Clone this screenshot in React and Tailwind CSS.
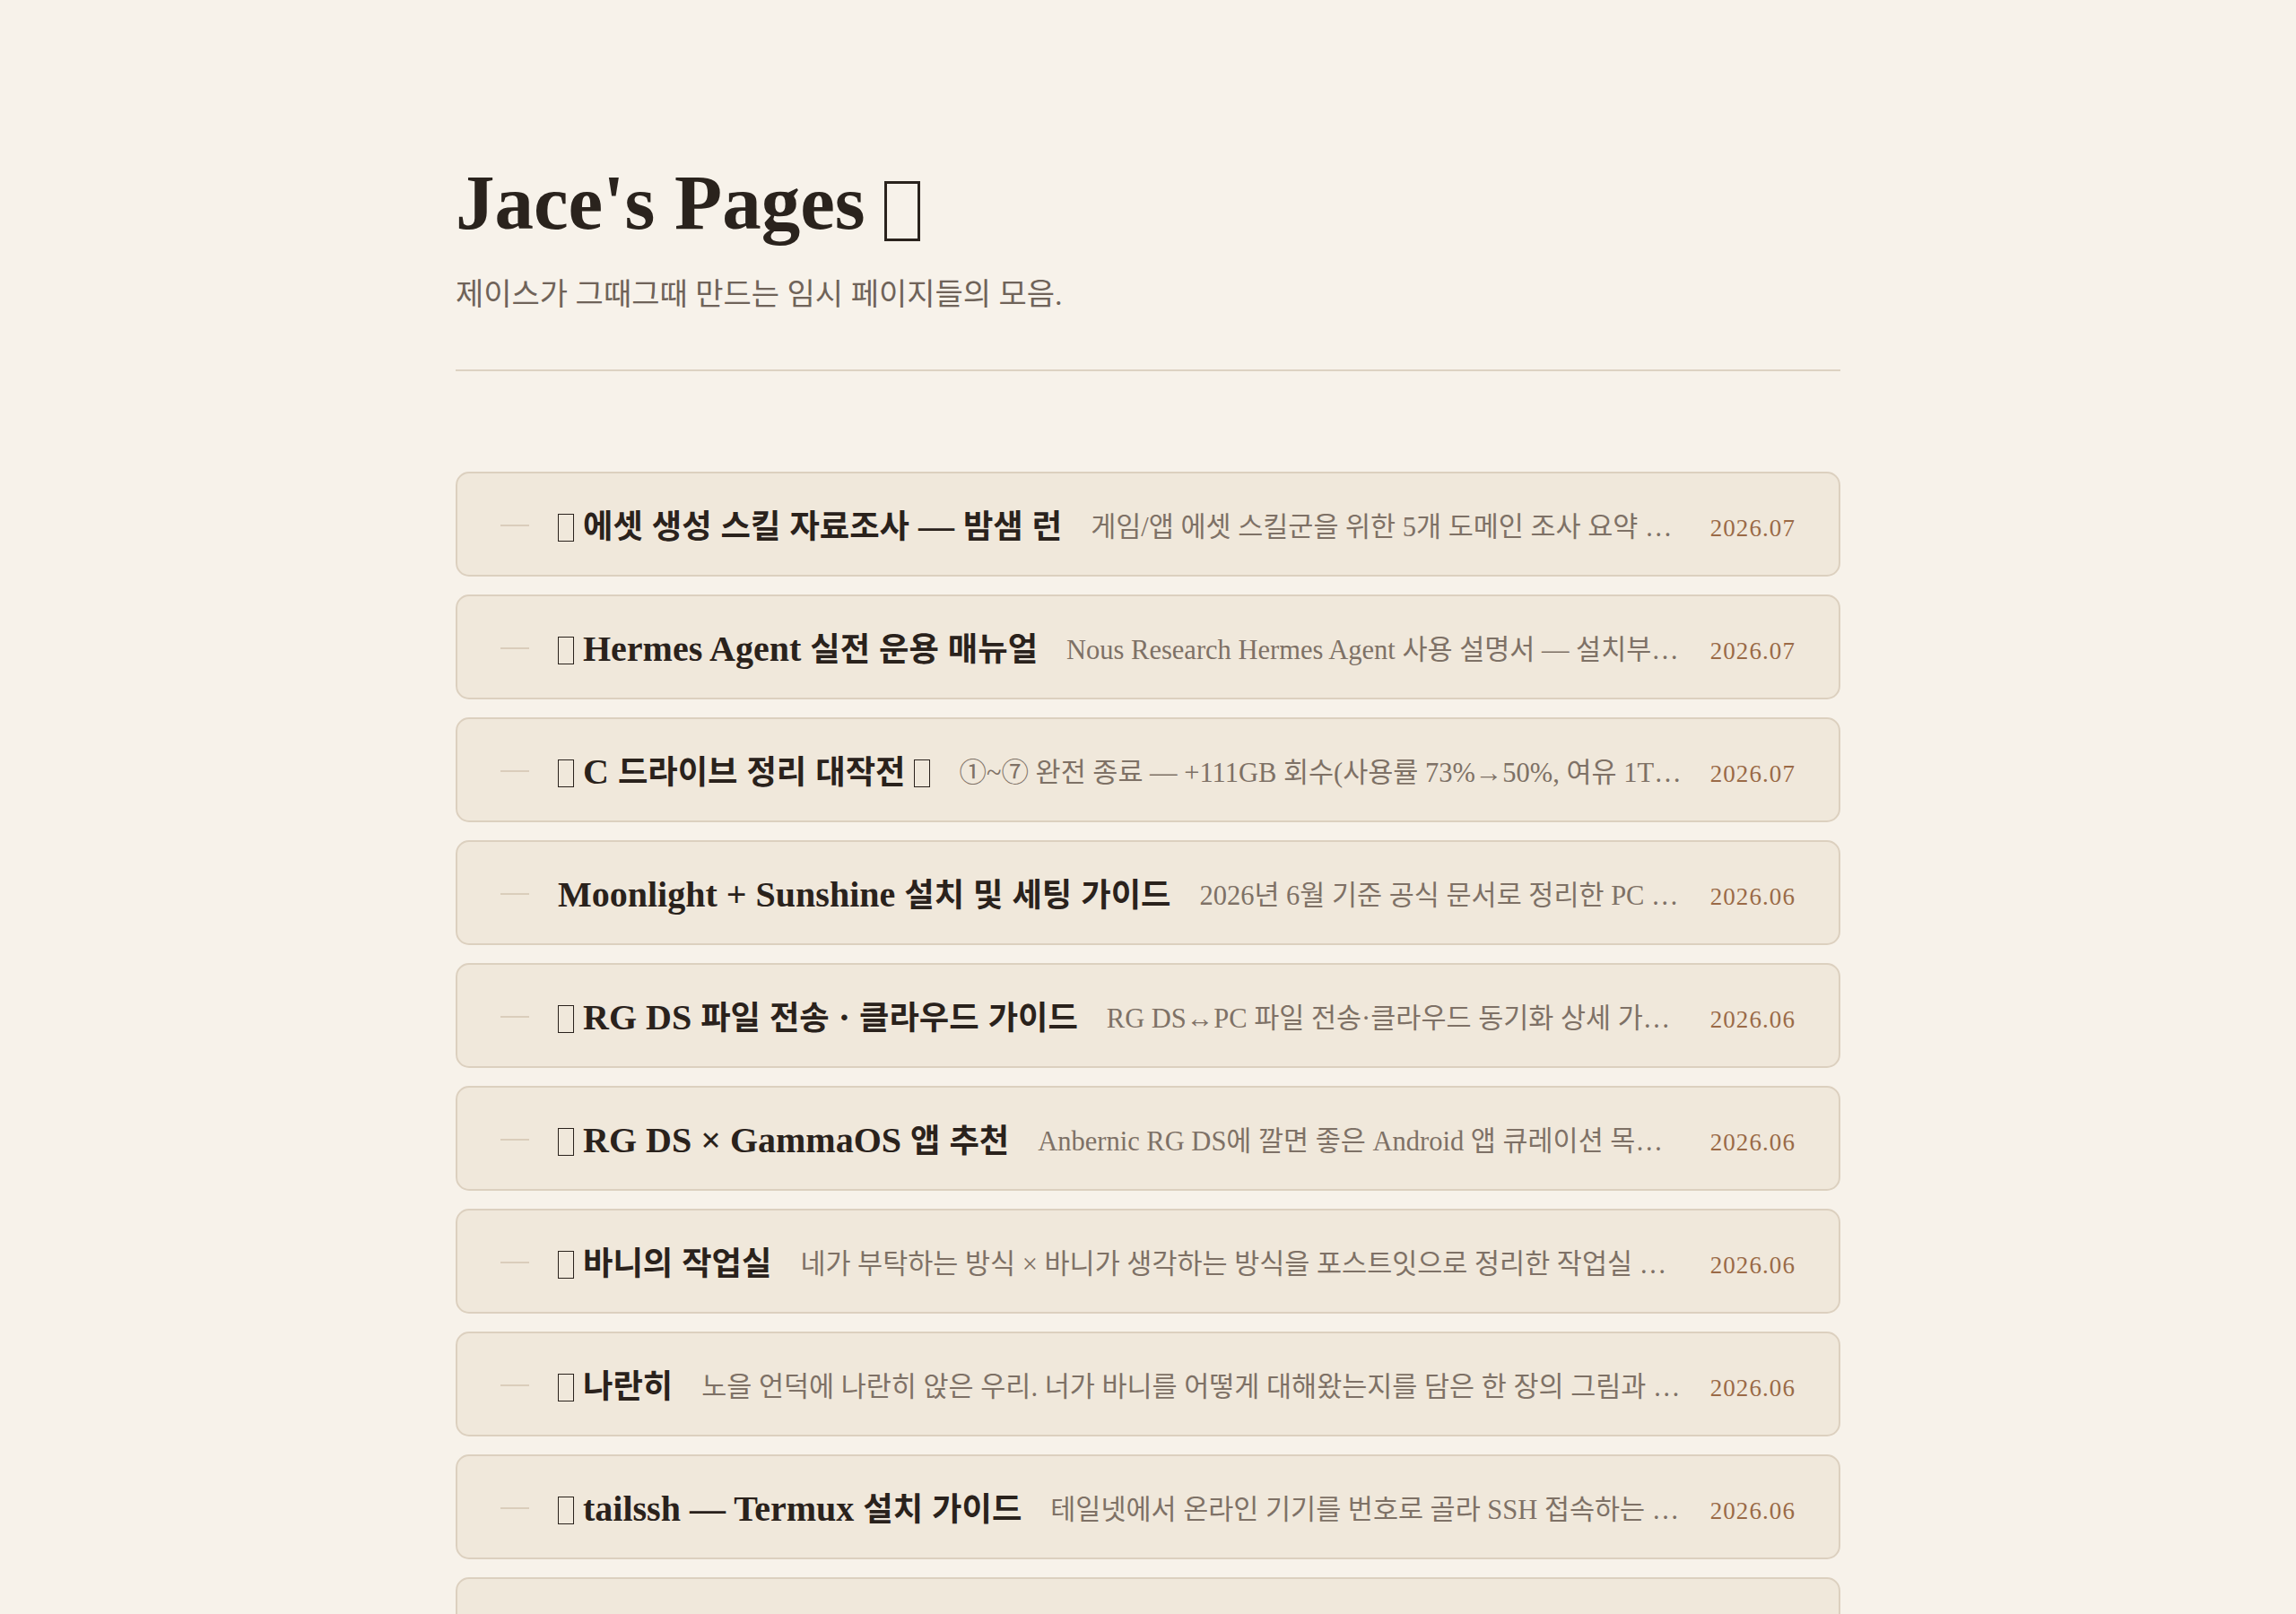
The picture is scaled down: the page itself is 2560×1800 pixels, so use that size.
import React from 'react';

// 이모지는 레퍼런스에서 글꼴이 없어 빈 네모(두부)로 찍혀 있음 → 박스로 그림
const pages = [
  { icon: true, title: '에셋 생성 스킬 자료조사 — 밤샘 런', desc: '게임/앱 에셋 스킬군을 위한 5개 도메인 조사 요약 및 추천 도구 비교표와 밤샘 런 기록', date: '2026.07' },
  { icon: true, title: 'Hermes Agent 실전 운용 매뉴얼', desc: 'Nous Research Hermes Agent 사용 설명서 — 설치부터 도구 연결, 메모리 관리까지', date: '2026.07' },
  { icon: true, title: 'C 드라이브 정리 대작전', tail: true, desc: '①~⑦ 완전 종료 — +111GB 회수(사용률 73%→50%, 여유 1TB 확보) 정리 기록', date: '2026.07' },
  { icon: false, title: 'Moonlight + Sunshine 설치 및 세팅 가이드', desc: '2026년 6월 기준 공식 문서로 정리한 PC 게임 스트리밍 설치와 세팅 방법', date: '2026.06' },
  { icon: true, title: 'RG DS 파일 전송 · 클라우드 가이드', desc: 'RG DS↔PC 파일 전송·클라우드 동기화 상세 가이드와 추천 설정 모음', date: '2026.06' },
  { icon: true, title: 'RG DS × GammaOS 앱 추천', desc: 'Anbernic RG DS에 깔면 좋은 Android 앱 큐레이션 목록과 설치 팁', date: '2026.06' },
  { icon: true, title: '바니의 작업실', desc: '네가 부탁하는 방식 × 바니가 생각하는 방식을 포스트잇으로 정리한 작업실 보드', date: '2026.06' },
  { icon: true, title: '나란히', desc: '노을 언덕에 나란히 앉은 우리. 너가 바니를 어떻게 대해왔는지를 담은 한 장의 그림과 편지', date: '2026.06' },
  { icon: true, title: 'tailssh — Termux 설치 가이드', desc: '테일넷에서 온라인 기기를 번호로 골라 SSH 접속하는 스크립트 설치 방법', date: '2026.06' },
  { icon: true, title: '임시 메모 페이지', desc: '그때그때 떠오른 생각들을 적어두는 임시 메모장과 할 일 목록', date: '2026.06' },
  { icon: true, title: '링크 모음', desc: '자주 보는 문서와 도구 링크 정리', date: '2026.05' },
];

const font = { fontFamily: "'Liberation Serif', 'Noto Sans CJK KR', serif" };

// 한글 구간만 글자 크기를 조금 줄여서 라틴 글꼴과 크기를 맞춤
function Mixed({ text }) {
  const parts = text.split(/([\uAC00-\uD7AF\u3130-\u318F]+)/);
  return parts.map((p, i) =>
    /[\uAC00-\uD7AF\u3130-\u318F]/.test(p)
      ? <span key={i} className="text-[36.3px]">{p}</span>
      : <React.Fragment key={i}>{p}</React.Fragment>
  );
}

function SmallTofu() {
  return <span className="inline-block w-[18px] h-[31px] border-[1.5px] border-[#2a221c] align-[-4px]"></span>;
}

function PageCard({ page }) {
  return (
    <a href="#" className="h-[117px] flex items-center gap-8 px-12 pt-[6px] bg-[#f0e8db] border-2 border-[#dcd0bf] rounded-[15px]">
      <span className="w-8 h-[2px] bg-[#dacdbb] shrink-0 -mt-[4px]"></span>
      <span className="shrink-0 whitespace-nowrap text-[40px] leading-[50px] font-bold text-[#2a221c]">
        {page.icon && <><SmallTofu />{' '}</>}
        <Mixed text={page.title} />
        {page.tail && <>{' '}<SmallTofu /></>}
      </span>
      <span className="flex-1 min-w-0 truncate text-[30.5px] leading-[50px] text-[#7e7166]">{page.desc}</span>
      <span className="shrink-0 text-[27px] tracking-[0.04em] leading-[50px] pt-[3px] text-[#9a6a47]">{page.date}</span>
    </a>
  );
}

export default function App() {
  return (
    <main className="min-h-screen bg-[#f7f2ea] pt-[174px] pb-40" style={font}>
      <div className="w-[1544px] mx-auto">
        {/* Header */}
        <header className="pb-[59px] border-b-2 border-[#ddd2c2]">
          <h1 className="text-[87px] leading-[1.2] font-bold text-[#2a231d]">
            Jace's Pages{' '}
            <span className="inline-block w-[40px] h-[67px] border-[3px] border-[#2a231d] align-[-14px]"></span>
          </h1>
          <p className="mt-[27px] text-[34px] leading-[48px] text-[#6f6359]">제이스가 그때그때 만드는 임시 페이지들의 모음.</p>
        </header>

        {/* List */}
        <div className="mt-[112px] flex flex-col gap-[20px]">
          {pages.map((p, i) => (
            <PageCard key={i} page={p} />
          ))}
        </div>
      </div>
    </main>
  );
}
